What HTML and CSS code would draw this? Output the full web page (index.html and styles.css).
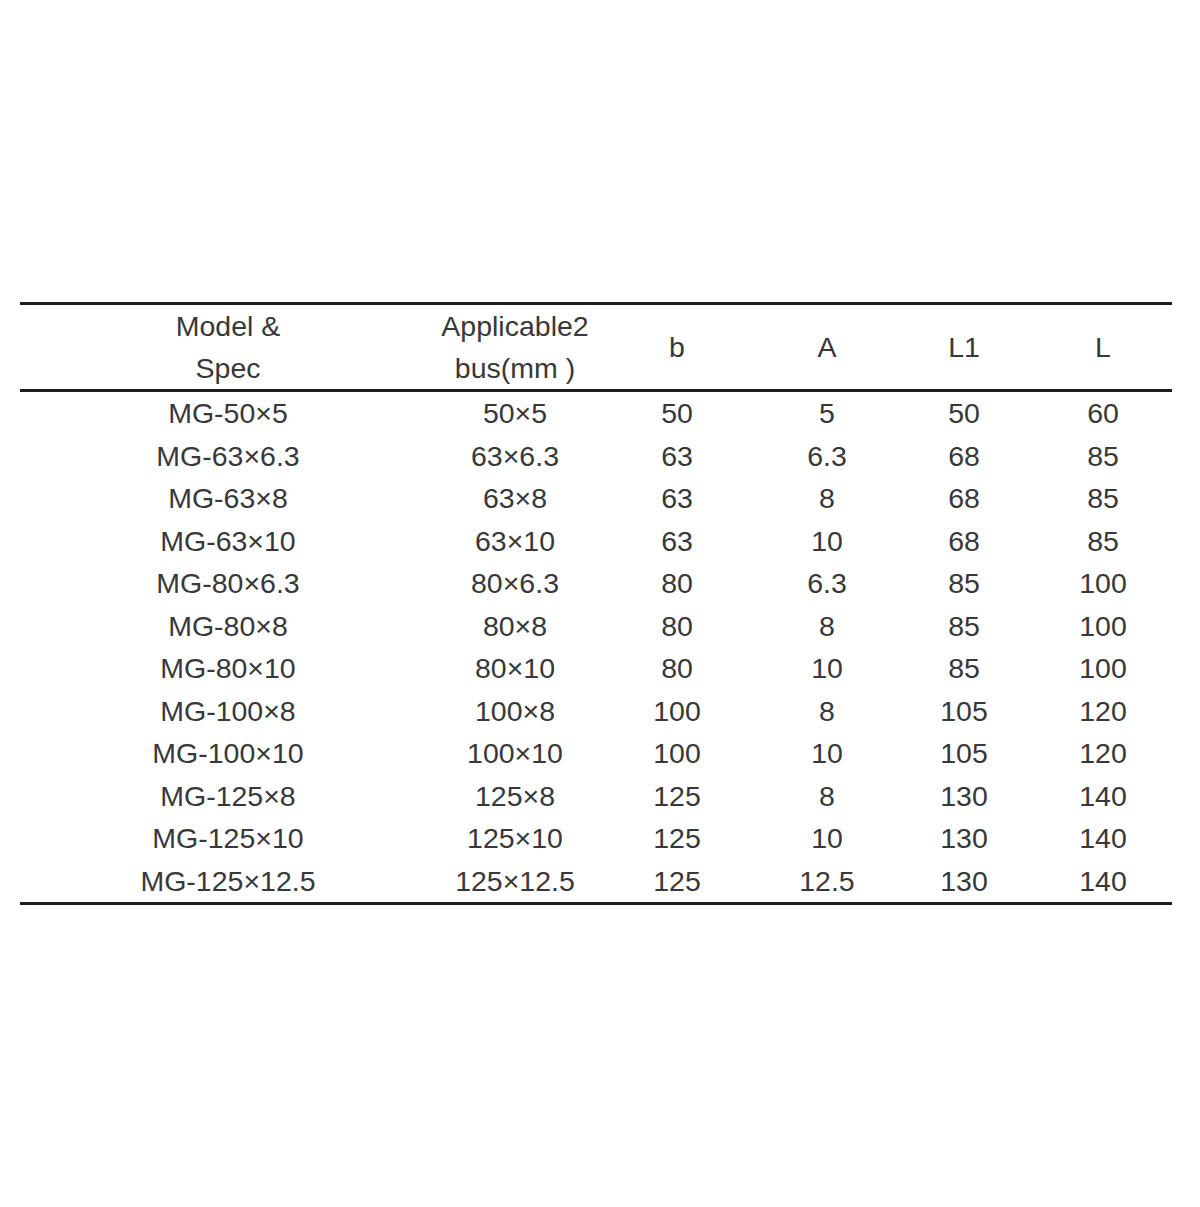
FILE: index.html
```html
<!DOCTYPE html>
<html>
<head>
<meta charset="utf-8">
<link rel="stylesheet" href="styles.css">
</head>
<body>
<div class="page">
<table class="spec">
<colgroup>
<col class="c1"><col class="c2"><col class="c3"><col class="c4"><col class="c5"><col class="c6">
</colgroup>
<thead>
<tr><th>Model &amp;<br>Spec</th><th>Applicable2<br>bus(mm )</th><th>b</th><th>A</th><th>L1</th><th>L</th></tr>
</thead>
<tbody>
<tr><td>MG-50×5</td><td>50×5</td><td>50</td><td>5</td><td>50</td><td>60</td></tr>
<tr><td>MG-63×6.3</td><td>63×6.3</td><td>63</td><td>6.3</td><td>68</td><td>85</td></tr>
<tr><td>MG-63×8</td><td>63×8</td><td>63</td><td>8</td><td>68</td><td>85</td></tr>
<tr><td>MG-63×10</td><td>63×10</td><td>63</td><td>10</td><td>68</td><td>85</td></tr>
<tr><td>MG-80×6.3</td><td>80×6.3</td><td>80</td><td>6.3</td><td>85</td><td>100</td></tr>
<tr><td>MG-80×8</td><td>80×8</td><td>80</td><td>8</td><td>85</td><td>100</td></tr>
<tr><td>MG-80×10</td><td>80×10</td><td>80</td><td>10</td><td>85</td><td>100</td></tr>
<tr><td>MG-100×8</td><td>100×8</td><td>100</td><td>8</td><td>105</td><td>120</td></tr>
<tr><td>MG-100×10</td><td>100×10</td><td>100</td><td>10</td><td>105</td><td>120</td></tr>
<tr><td>MG-125×8</td><td>125×8</td><td>125</td><td>8</td><td>130</td><td>140</td></tr>
<tr><td>MG-125×10</td><td>125×10</td><td>125</td><td>10</td><td>130</td><td>140</td></tr>
<tr><td>MG-125×12.5</td><td>125×12.5</td><td>125</td><td>12.5</td><td>130</td><td>140</td></tr>
</tbody>
</table>
</div>
</body>
</html>
```
FILE: styles.css
```css
html, body {
  margin: 0;
  padding: 0;
  background: #fff;
}
.page {
  padding: 302px 28px 0 20px;
  height: 905px;
}
.spec {
  width: 1152px;
  border-collapse: collapse;
  table-layout: fixed;
  font-family: "Liberation Sans", Arial, sans-serif;
  font-size: 28.5px;
  color: #383838;
  border-top: 3px solid #1e1e1e;
  border-bottom: 3px solid #1e1e1e;
}
.c1 { width: 416px; }
.c2 { width: 158px; }
.c3 { width: 166px; }
.c4 { width: 134px; }
.c5 { width: 140px; }
.c6 { width: 138px; }
.spec th {
  font-weight: normal;
  text-align: center;
  padding: 0;
  line-height: 42px;
  height: 84px;
  border-bottom: 3px solid #1e1e1e;
  white-space: nowrap;
}
.spec td {
  text-align: center;
  padding: 0;
  height: 42.5px;
  line-height: 42.5px;
  white-space: nowrap;
}
```
